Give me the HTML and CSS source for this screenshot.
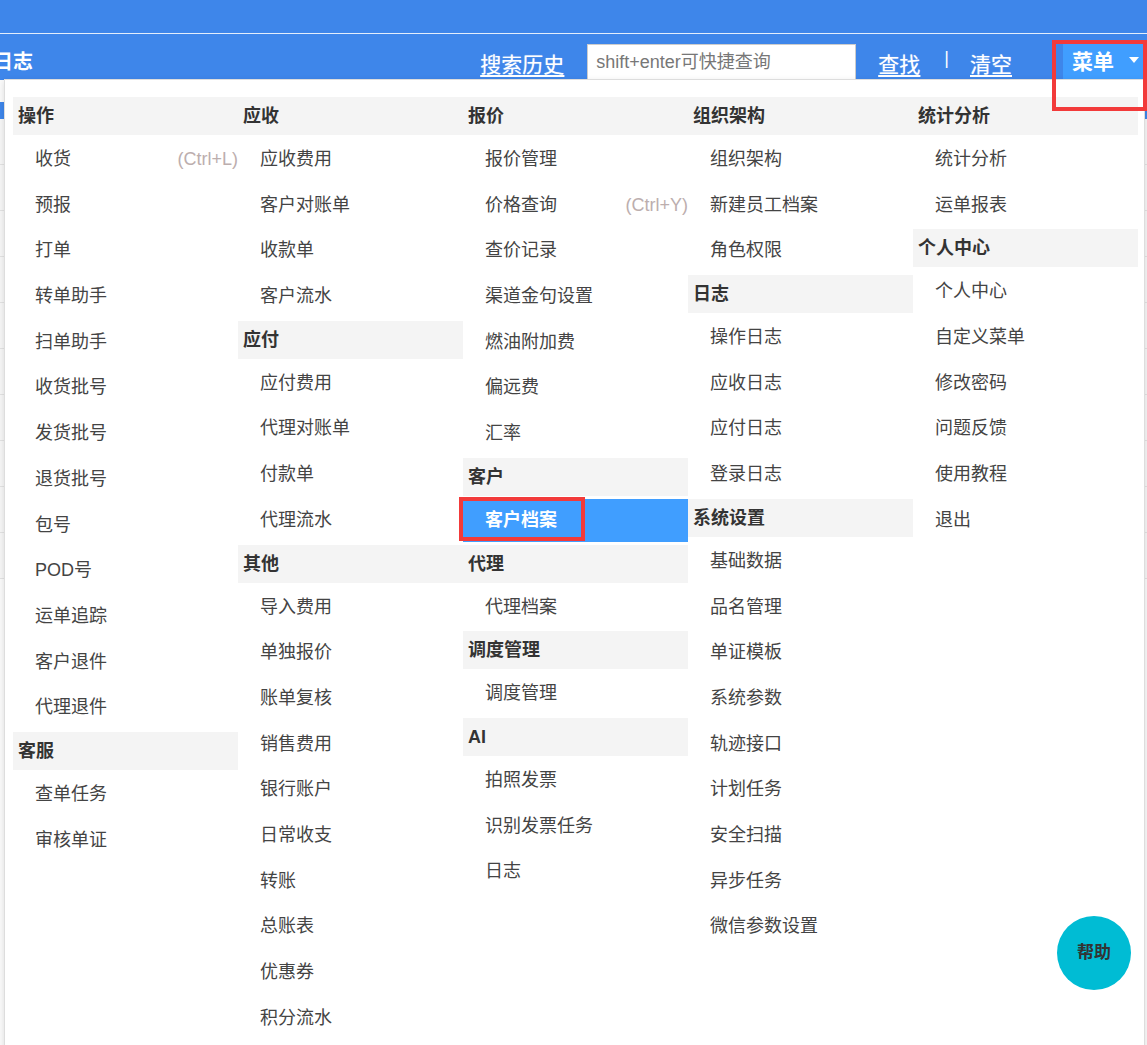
FILE: index.html
```html
<!DOCTYPE html>
<html lang="zh-CN">
<head>
  <meta charset="UTF-8">
  <meta name="viewport" content="width=device-width, initial-scale=1.0">
  <title>菜单</title>
  <link rel="stylesheet" href="styles.css">
</head>
<body>
  <!-- Top bars -->
  <div class="topbar"></div>
  <div class="navbar">
    <div class="nav-title">日志</div>
    <div class="nav-tools">
      <a class="nav-link link-history" href="#">搜索历史</a>
      <input class="search-box" type="text" placeholder="shift+enter可快捷查询">
      <a class="nav-link link-find" href="#">查找</a>
      <span class="nav-sep">|</span>
      <a class="nav-link link-clear" href="#">清空</a>
      <div class="menu-btn">
        菜单<span class="caret"></span>
        <span class="mark mark-menu"></span>
      </div>
    </div>
  </div>

  <!-- Page underneath the dropdown -->
  <div class="content">
    <div class="tabbar"><span class="tab-dot"></span></div>
    <div class="row"></div>
    <div class="row"></div>
    <div class="row"></div>
    <div class="row"></div>
    <div class="row"></div>
    <div class="row"></div>
    <div class="row"></div>
    <div class="row"></div>
    <div class="row"></div>
    <div class="row"></div>
  </div>

  <!-- Dropdown menu -->
  <div class="menu-panel">
    <ul class="menu-col">
      <li class="menu-head">操作</li>
      <li class="menu-item">收货<span class="shortcut">(Ctrl+L)</span></li>
      <li class="menu-item">预报</li>
      <li class="menu-item">打单</li>
      <li class="menu-item">转单助手</li>
      <li class="menu-item">扫单助手</li>
      <li class="menu-item">收货批号</li>
      <li class="menu-item">发货批号</li>
      <li class="menu-item">退货批号</li>
      <li class="menu-item">包号</li>
      <li class="menu-item">POD号</li>
      <li class="menu-item">运单追踪</li>
      <li class="menu-item">客户退件</li>
      <li class="menu-item">代理退件</li>
      <li class="menu-head">客服</li>
      <li class="menu-item">查单任务</li>
      <li class="menu-item">审核单证</li>
    </ul>
    <ul class="menu-col">
      <li class="menu-head">应收</li>
      <li class="menu-item">应收费用</li>
      <li class="menu-item">客户对账单</li>
      <li class="menu-item">收款单</li>
      <li class="menu-item">客户流水</li>
      <li class="menu-head">应付</li>
      <li class="menu-item">应付费用</li>
      <li class="menu-item">代理对账单</li>
      <li class="menu-item">付款单</li>
      <li class="menu-item">代理流水</li>
      <li class="menu-head">其他</li>
      <li class="menu-item">导入费用</li>
      <li class="menu-item">单独报价</li>
      <li class="menu-item">账单复核</li>
      <li class="menu-item">销售费用</li>
      <li class="menu-item">银行账户</li>
      <li class="menu-item">日常收支</li>
      <li class="menu-item">转账</li>
      <li class="menu-item">总账表</li>
      <li class="menu-item">优惠券</li>
      <li class="menu-item">积分流水</li>
    </ul>
    <ul class="menu-col">
      <li class="menu-head">报价</li>
      <li class="menu-item">报价管理</li>
      <li class="menu-item">价格查询<span class="shortcut">(Ctrl+Y)</span></li>
      <li class="menu-item">查价记录</li>
      <li class="menu-item">渠道金句设置</li>
      <li class="menu-item">燃油附加费</li>
      <li class="menu-item">偏远费</li>
      <li class="menu-item">汇率</li>
      <li class="menu-head">客户</li>
      <li class="menu-item active">客户档案<span class="mark mark-item"></span></li>
      <li class="menu-head">代理</li>
      <li class="menu-item">代理档案</li>
      <li class="menu-head">调度管理</li>
      <li class="menu-item">调度管理</li>
      <li class="menu-head">AI</li>
      <li class="menu-item">拍照发票</li>
      <li class="menu-item">识别发票任务</li>
      <li class="menu-item">日志</li>
    </ul>
    <ul class="menu-col">
      <li class="menu-head">组织架构</li>
      <li class="menu-item">组织架构</li>
      <li class="menu-item">新建员工档案</li>
      <li class="menu-item">角色权限</li>
      <li class="menu-head">日志</li>
      <li class="menu-item">操作日志</li>
      <li class="menu-item">应收日志</li>
      <li class="menu-item">应付日志</li>
      <li class="menu-item">登录日志</li>
      <li class="menu-head">系统设置</li>
      <li class="menu-item">基础数据</li>
      <li class="menu-item">品名管理</li>
      <li class="menu-item">单证模板</li>
      <li class="menu-item">系统参数</li>
      <li class="menu-item">轨迹接口</li>
      <li class="menu-item">计划任务</li>
      <li class="menu-item">安全扫描</li>
      <li class="menu-item">异步任务</li>
      <li class="menu-item">微信参数设置</li>
    </ul>
    <ul class="menu-col">
      <li class="menu-head">统计分析</li>
      <li class="menu-item">统计分析</li>
      <li class="menu-item">运单报表</li>
      <li class="menu-head">个人中心</li>
      <li class="menu-item">个人中心</li>
      <li class="menu-item">自定义菜单</li>
      <li class="menu-item">修改密码</li>
      <li class="menu-item">问题反馈</li>
      <li class="menu-item">使用教程</li>
      <li class="menu-item">退出</li>
    </ul>
  </div>

  <div class="help-btn">帮助</div>
</body>
</html>
```

FILE: styles.css
```css
/* General */
html, body {
  height: 100%;
}

body {
  margin: 0;
  overflow: hidden;
  background-color: #fafafa;
  font-family: "Liberation Sans", "Noto Sans CJK SC", sans-serif;
  font-size: 18px;
  color: #444;
}

/* Top bars */
.topbar {
  height: 33px;
  background-color: #3e86ea;
  border-bottom: 1px solid #e3eefc;
}

.navbar {
  display: flex;
  height: 46px;
  background-color: #3e86ea;
  color: #fff;
}

.nav-title {
  margin: 16px 0 0 -7px;
  font-size: 20px;
  font-weight: bold;
  line-height: 24px;
}

.nav-tools {
  display: flex;
  align-items: flex-start;
  margin-left: auto;
}

.nav-link {
  margin-top: 18px;
  font-size: 21px;
  line-height: 26px;
  color: #fff;
  text-decoration: underline;
  text-underline-offset: 3px;
  text-shadow: 0 0 1px rgba(255, 255, 255, 0.6);
}

.link-history {
  margin-right: 23px;
}

.link-find {
  margin-right: 24px;
}

.link-clear {
  margin-right: 51px;
}

.nav-sep {
  margin: 12px 21px 0 0;
  font-size: 18px;
  line-height: 24px;
}

.search-box {
  width: 269px;
  height: 36px;
  margin: 10px 22px 0 0;
  padding: 0 8px;
  box-sizing: border-box;
  border: 1px solid #ccc;
  font-family: inherit;
  font-size: 18px;
  color: #777;
  background: #fff;
}

.search-box::placeholder {
  color: #777;
}

.menu-btn {
  position: relative;
  display: flex;
  align-items: center;
  width: 84px;
  height: 39px;
  margin-top: 6px;
  padding-left: 9px;
  box-sizing: border-box;
  background-color: #409eff;
  font-size: 21px;
  font-weight: bold;
}

.caret {
  margin-left: 15px;
  border-top: 6px solid #fff;
  border-left: 5px solid transparent;
  border-right: 5px solid transparent;
}

/* Annotation boxes */
.mark {
  position: absolute;
  z-index: 10;
  border: 4px solid #f23a3a;
  box-sizing: border-box;
  pointer-events: none;
}

.mark-menu {
  left: -11px;
  top: 0;
  width: 95px;
  height: 71px;
}

.mark-item {
  left: -4px;
  top: -2px;
  width: 126px;
  height: 44px;
}

/* Page under the dropdown */
.content {
  background-color: #fff;
}

.tabbar {
  height: 17px;
  background-color: #3e86ea;
}

.tab-dot {
  display: block;
  width: 20px;
  height: 20px;
  margin: 22px 0 0 -16px;
  border-radius: 50%;
  border: 3px solid #3e86ea;
}

.row {
  height: 45px;
  border-bottom: 1px solid #e2e2e2;
  background-color: #f6f6f6;
}

/* Dropdown panel */
.menu-panel {
  position: absolute;
  z-index: 5;
  left: 4px;
  top: 79px;
  display: grid;
  grid-template-columns: repeat(5, 225px);
  align-items: start;
  width: 1141px;
  padding: 14px 6px 30px 8px;
  box-sizing: border-box;
  background-color: #fff;
  border: 1px solid #ddd;
  box-shadow: 0 2px 6px rgba(0, 0, 0, 0.12);
}

.menu-col {
  margin: 0;
  padding: 0;
  list-style: none;
}

.menu-head {
  height: 38px;
  margin-top: 3px;
  padding-left: 5px;
  line-height: 38px;
  background-color: #f4f4f4;
  font-weight: bold;
  color: #333;
}

.menu-item {
  position: relative;
  display: flex;
  justify-content: space-between;
  height: 42.7px;
  margin-top: 3px;
  padding-left: 22px;
  line-height: 42.7px;
}

.menu-item.active {
  background-color: #409eff;
  color: #fff;
  font-weight: bold;
}

.shortcut {
  color: #bcaeae;
}

/* Floating help button */
.help-btn {
  position: fixed;
  z-index: 20;
  right: 16px;
  bottom: 55px;
  width: 74px;
  height: 74px;
  border-radius: 50%;
  background-color: #00bcd4;
  color: #333;
  font-size: 17px;
  font-weight: bold;
  line-height: 74px;
  text-align: center;
}
```
